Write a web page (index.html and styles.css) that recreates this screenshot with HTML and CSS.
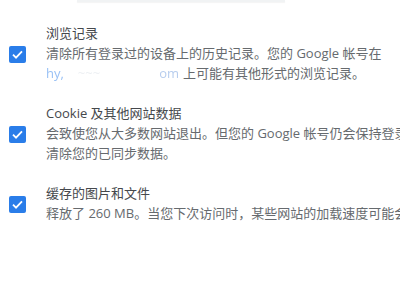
FILE: index.html
```html
<!DOCTYPE html>
<html lang="zh-CN">
<head>
<meta charset="utf-8">
<link rel="stylesheet" href="styles.css">
</head>
<body>
<div class="topbar"></div>
<div class="list">
  <div class="row">
    <span class="cb"><svg viewBox="0 0 17 17" width="17" height="17"><path d="M4 8.6l3 3 6-6.2" fill="none" stroke="#fff" stroke-width="1.8"/></svg></span>
    <div class="text">
      <div class="title">浏览记录</div>
      <div class="desc">清除所有登录过的设备上的历史记录。您的 Google 帐号在</div>
      <div class="desc"><span class="redact"><span class="r1">hy,</span><span class="r2">~~~</span><span class="r3">om</span></span>上可能有其他形式的浏览记录。</div>
    </div>
  </div>
  <div class="row">
    <span class="cb"><svg viewBox="0 0 17 17" width="17" height="17"><path d="M4 8.6l3 3 6-6.2" fill="none" stroke="#fff" stroke-width="1.8"/></svg></span>
    <div class="text">
      <div class="title">Cookie 及其他网站数据</div>
      <div class="desc">会致使您从大多数网站退出。但您的 Google 帐号仍会保持登录状态</div>
      <div class="desc">清除您的已同步数据。</div>
    </div>
  </div>
  <div class="row">
    <span class="cb"><svg viewBox="0 0 17 17" width="17" height="17"><path d="M4 8.6l3 3 6-6.2" fill="none" stroke="#fff" stroke-width="1.8"/></svg></span>
    <div class="text">
      <div class="title">缓存的图片和文件</div>
      <div class="desc">释放了 260 MB。当您下次访问时，某些网站的加载速度可能会更慢。</div>
    </div>
  </div>
</div>
</body>
</html>
```
FILE: styles.css
```css
html, body {
  margin: 0;
  padding: 0;
  background: #fff;
  overflow: hidden;
  width: 400px;
  height: 300px;
}
body {
  font-family: "Open Sans", "Noto Sans CJK SC", sans-serif;
  font-size: 13px;
  color: #5f6368;
}
.topbar {
  margin-left: 77px;
  width: 208px;
  height: 2px;
  background: #f1f3f4;
  box-shadow: 0 1px 1px rgba(60,64,67,0.06);
}
.list {
  display: flex;
  flex-direction: column;
  gap: 20px;
  padding-top: 21px;
}
.row {
  display: flex;
  align-items: center;
  white-space: nowrap;
}
.cb {
  flex: none;
  width: 17px;
  height: 17px;
  margin-left: 9px;
  margin-right: 20px;
  margin-top: 2px;
  background: #2a7de9;
  border-radius: 2px;
  display: flex;
}
.text {
  line-height: 20px;
}
.title {
  color: #45484c;
}
.desc {
  color: #666a6e;
}
.redact {
  display: inline-block;
  width: 137px;
  position: relative;
  color: #1a73e8;
  opacity: 0.45;
  filter: blur(0.5px);
}
.r1 { margin-right: 14px; }
.r2 { color: #9ab; opacity: 0.4; }
.r3 { position: absolute; right: 4px; color: #5f8fd8; }
```
